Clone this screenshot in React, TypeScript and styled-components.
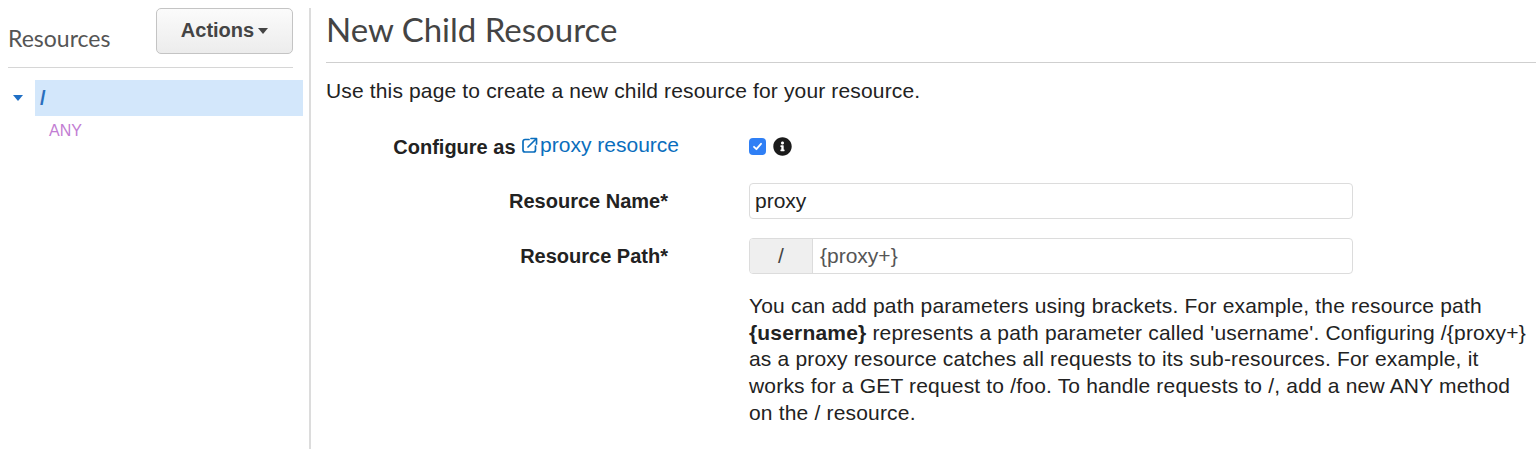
import styled, { createGlobalStyle } from 'styled-components';
import { FaInfoCircle } from 'react-icons/fa';

const GlobalStyle = createGlobalStyle`
  html, body {
    margin: 0;
    background: #fff;
  }
  body {
    font-family: 'Liberation Sans', Arial, sans-serif;
    color: #222;
  }
`;

const Page = styled('div')`
  display: flex;
  min-height: 449px;
  padding-top: 8px;
  box-sizing: border-box;
`;

const Sidebar = styled('aside')`
  padding: 0 6px 0 8px;
  box-sizing: border-box;
  flex: 0 0 311px;
  border-right: 2px solid #dcdcdc;
`;

const SidebarHeader = styled('div')`
  display: flex;
  align-items: center;
  justify-content: space-between;
  margin-right: 10px;
  padding-bottom: 13px;
  border-bottom: 1px solid #d6d6d6;
`;

const SidebarTitle = styled('span')`
  font-family: Lato, 'Liberation Sans', sans-serif;
  font-size: 23px;
  color: #555;
  margin-top: 13px;
`;

const ActionsButton = styled('button')`
  display: flex;
  align-items: center;
  gap: 4px;
  height: 46px;
  width: 137px;
  justify-content: center;
  border: 1px solid #c4c4c4;
  border-radius: 5px;
  background: linear-gradient(#fbfbfb, #ececec);
  font-family: 'Liberation Sans', Arial, sans-serif;
  font-weight: bold;
  font-size: 20px;
  color: #444;
  padding: 0 0 1px;
`;

const Caret = styled('span')<{ $color?: string; $size?: number }>`
  display: inline-block;
  width: 0;
  height: 0;
  border-left: ${(p) => p.$size ?? 5}px solid transparent;
  border-right: ${(p) => p.$size ?? 5}px solid transparent;
  border-top: ${(p) => (p.$size ?? 5) + 1}px solid ${(p) => p.$color ?? '#444'};
`;

const Tree = styled('div')`
  margin-top: 12px;
`;

const TreeRow = styled('div')`
  display: flex;
  align-items: center;
  height: 36px;
`;

const Toggle = styled('span')`
  width: 27px;
  padding-left: 5px;
  box-sizing: border-box;
  display: flex;
`;

const SelectedNode = styled('div')`
  flex: 1;
  height: 100%;
  display: flex;
  align-items: center;
  padding-left: 5px;
  background: #d3e7fb;
  font-weight: bold;
  font-size: 20px;
  color: #2a6fbd;
`;

const MethodNode = styled('div')`
  padding: 6px 0 0 41px;
  font-size: 16px;
  color: #c27dd3;
`;

const Main = styled('main')`
  flex: 1;
  padding-left: 15px;
`;

const Heading = styled('h1')`
  margin: 5px 0 0;
  padding-bottom: 16px;
  border-bottom: 1px solid #cfcfcf;
  font-family: Lato, 'Liberation Sans', sans-serif;
  font-weight: normal;
  font-size: 33px;
  line-height: 33px;
  color: #444;
`;

const Intro = styled('p')`
  margin: 14px 0 0;
  font-size: 21px;
  line-height: 27px;
  letter-spacing: 0.15px;
`;

const Form = styled('div')`
  display: flex;
  flex-direction: column;
  gap: 19px;
  margin-top: 24px;
`;

const Row = styled('div')`
  display: grid;
  grid-template-columns: 423px 604px;
  align-items: center;
  min-height: 36px;
`;

const Label = styled('label')<{ $pad: number }>`
  text-align: right;
  padding-right: ${(p) => p.$pad}px;
  font-weight: bold;
  font-size: 20px;
  color: #222;
`;

const Link = styled('a')`
  font-weight: normal;
  font-size: 21px;
  color: #0a6ebd;
  text-decoration: none;
  display: inline-flex;
  align-items: center;
  gap: 2px;
`;

const Controls = styled('div')`
  display: flex;
  align-items: center;
  gap: 7px;
`;

const Checkbox = styled('span')`
  width: 17px;
  height: 17px;
  border-radius: 4px;
  background: #2f7ff5;
  display: flex;
  align-items: center;
  justify-content: center;
`;

const InfoIcon = styled(FaInfoCircle)`
  font-size: 19px;
  color: #1b1b1b;
`;

const TextBox = styled('div')`
  height: 36px;
  border: 1px solid #dcdcdc;
  border-radius: 4px;
  box-sizing: border-box;
  display: flex;
  align-items: center;
  overflow: hidden;
  font-size: 21px;
`;

const Addon = styled('span')`
  width: 62px;
  height: 100%;
  display: flex;
  align-items: center;
  justify-content: center;
  background: #efefef;
  border-right: 1px solid #dcdcdc;
  color: #444;
`;

const Value = styled('span')<{ $muted?: boolean }>`
  padding-left: ${(p) => (p.$muted ? 7 : 5)}px;
  color: ${(p) => (p.$muted ? '#555' : '#222')};
`;

const Help = styled('p')`
  margin: 0 0 0 423px;
  width: 790px;
  font-size: 21px;
  line-height: 26.7px;
  letter-spacing: 0.18px;
  color: #222;
`;

const ExternalIcon = () => (
  <svg width="17" height="17" viewBox="0 0 17 17" fill="none" stroke="#0a6ebd" strokeWidth="1.7" strokeLinecap="round" strokeLinejoin="round">
    <path d="M8 2.5H4a2 2 0 0 0-2 2v8.5a2 2 0 0 0 2 2h8.5a2 2 0 0 0 2-2V9" />
    <path d="M7 10 15 2" />
    <path d="M10 1.5h5.5V7" />
  </svg>
);

const CheckMark = () => (
  <svg width="11" height="11" viewBox="0 0 11 11" fill="none" stroke="#fff" strokeWidth="1.8" strokeLinecap="round" strokeLinejoin="round">
    <path d="M2 5.8 4.4 8.2 9 2.8" />
  </svg>
);

const App = () => {
  return (
    <>
      <GlobalStyle />
      <Page>
        <Sidebar>
          <SidebarHeader>
            <SidebarTitle>Resources</SidebarTitle>
            <ActionsButton>
              Actions
              <Caret $size={5} />
            </ActionsButton>
          </SidebarHeader>
          <Tree>
            <TreeRow>
              <Toggle>
                <Caret $color="#1f6fc5" $size={5} />
              </Toggle>
              <SelectedNode>/</SelectedNode>
            </TreeRow>
            <MethodNode>ANY</MethodNode>
          </Tree>
        </Sidebar>
        <Main>
          <Heading>New Child Resource</Heading>
          <Intro>Use this page to create a new child resource for your resource.</Intro>
          <Form>
            <Row>
              <Label $pad={70}>
                Configure as{' '}
                <Link href="#">
                  <ExternalIcon />
                  proxy resource
                </Link>
              </Label>
              <Controls>
                <Checkbox>
                  <CheckMark />
                </Checkbox>
                <InfoIcon />
              </Controls>
            </Row>
            <Row>
              <Label $pad={81}>Resource Name*</Label>
              <TextBox>
                <Value>proxy</Value>
              </TextBox>
            </Row>
            <Row>
              <Label $pad={81}>Resource Path*</Label>
              <TextBox>
                <Addon>/</Addon>
                <Value $muted>{'{proxy+}'}</Value>
              </TextBox>
            </Row>
            <Help>
              You can add path parameters using brackets. For example, the resource path{' '}
              <b>{'{username}'}</b> represents a path parameter called 'username'. Configuring
              /{'{proxy+}'} as a proxy resource catches all requests to its sub-resources. For
              example, it works for a GET request to /foo. To handle requests to /, add a new ANY
              method on the / resource.
            </Help>
          </Form>
        </Main>
      </Page>
    </>
  );
};

export default App;
